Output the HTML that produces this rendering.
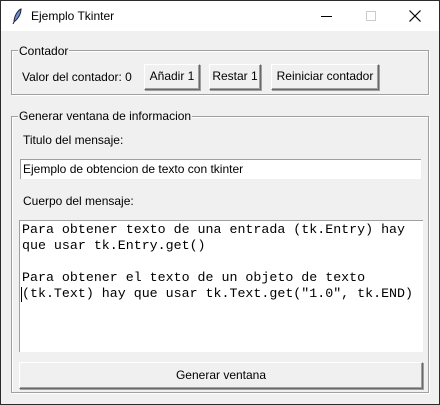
<!DOCTYPE html>
<html><head><style>
*{margin:0;padding:0;box-sizing:border-box}
body{width:440px;height:405px;overflow:hidden;background:#f0f0f0;font-family:"Liberation Sans",sans-serif;font-size:12px;color:#000;position:relative}
.win{position:absolute;left:0;top:0;width:440px;height:405px;border:1px solid #2b2b2b;}
.tb{position:absolute;left:0;top:0;width:438px;height:30px;background:#fff}
.a{position:absolute;white-space:nowrap}
.fr{position:absolute;border:1px solid #a0a0a0;box-shadow:inset 1px 1px 0 #fff,1px 1px 0 #fff}
.lg{position:absolute;background:#f0f0f0;padding:0 1px;line-height:14px}
.btn{position:absolute;background:#f0f0f0;border:1px solid;border-color:#fff #696969 #696969 #fff;box-shadow:1px 1px 0 #a0a0a0, inset -1px -1px 0 #a0a0a0;text-align:center;line-height:23px}
.mono{font-family:"Liberation Mono",monospace;font-size:13.3px;line-height:16px;white-space:pre;color:#000}
</style></head><body>
<div class="win">
<div class="tb">
<svg class="a" style="left:10px;top:7px" width="12" height="16" viewBox="0 0 12 16"><path d="M3 14 C3 9 6 3 10 1 C10 6 7 11 3 14Z" fill="#6b8fd6" stroke="#223" stroke-width="1"/><path d="M3 14 L2 16" stroke="#223"/></svg>
<div class="a" style="left:30px;top:8px;font-size:12px">Ejemplo Tkinter</div>
<div class="a" style="left:320px;top:15px;width:11px;height:1px;background:#000"></div>
<div class="a" style="left:365px;top:10px;width:10px;height:10px;border:1px solid #ccc"></div>
<svg class="a" style="left:408px;top:9px" width="12" height="12"><path d="M0.5 0.5L11.5 11.5M11.5 0.5L0.5 11.5" stroke="#000" stroke-width="1.2"/></svg>
</div>
<div class="fr" style="left:10px;top:49px;width:418px;height:45px"></div>
<div class="lg" style="left:17px;top:43px">Contador</div>
<div class="a" style="left:21px;top:69px">Valor del contador: 0</div>
<div class="btn" style="left:143px;top:63px;width:56px;height:26px">Añadir 1</div>
<div class="btn" style="left:208px;top:63px;width:52px;height:26px">Restar 1</div>
<div class="btn" style="left:270px;top:63px;width:108px;height:26px">Reiniciar contador</div>
<div class="fr" style="left:10px;top:115px;width:418px;height:277px"></div>
<div class="lg" style="left:17px;top:108px">Generar ventana de informacion</div>
<div class="a" style="left:22px;top:132px">Titulo del mensaje:</div>
<div class="a" style="left:19px;top:158px;width:401px;height:20px;background:#fff;border-top:1px solid #a0a0a0;border-left:1px solid #a0a0a0"></div>
<div class="a" style="left:22px;top:161px">Ejemplo de obtencion de texto con tkinter</div>
<div class="a" style="left:22px;top:193px">Cuerpo del mensaje:</div>
<div class="a" style="left:18px;top:219px;width:404px;height:132px;background:#fff;border-top:1px solid #a0a0a0;border-left:1px solid #a0a0a0"></div>
<div class="a mono" style="left:21px;top:221px">Para obtener texto de una entrada (tk.Entry) hay
que usar tk.Entry.get()

Para obtener el texto de un objeto de texto
(tk.Text) hay que usar tk.Text.get("1.0", tk.END)</div>
<div class="a" style="left:20px;top:286px;width:1px;height:15px;background:#000"></div>
<div class="btn" style="left:18px;top:361px;width:404px;height:27px;line-height:24px">Generar ventana</div>
</div>
</body></html>
